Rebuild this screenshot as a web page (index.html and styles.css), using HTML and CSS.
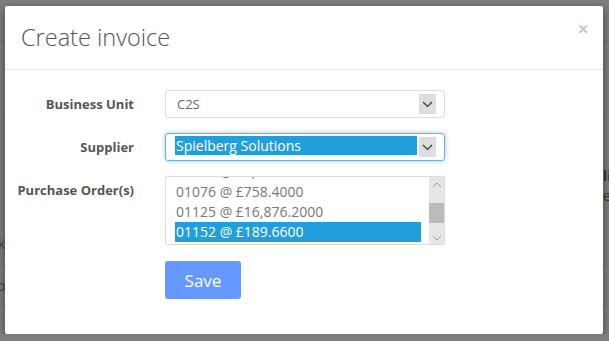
FILE: index.html
```html
<!DOCTYPE html>
<html lang="en">
<head>
    <meta charset="UTF-8">
    <meta name="viewport" content="width=device-width, initial-scale=1.0">
    <title>Create invoice</title>
    <link rel="stylesheet" href="styles.css">
</head>
<body>
    <!-- page behind the dialog -->
    <div class="backdrop">
        <span class="peek peek-k">k</span>
        <span class="peek peek-o">o</span>
        <span class="peek peek-li">li</span>
        <span class="peek peek-e">e</span>
    </div>

    <div class="overlay">
        <div class="modal">
            <div class="modal-header">
                <h1>Create invoice</h1>
                <span class="close">&times;</span>
            </div>
            <div class="modal-body">
                <label class="control-label">Business Unit</label>
                <div class="select">
                    <span class="select-text">C2S</span>
                    <span class="select-arrow">
                        <svg width="11" height="7" viewBox="0 0 11 7"><path d="M1 1l4.5 4.5L10 1" fill="none" stroke="#333" stroke-width="1.1"/></svg>
                    </span>
                </div>

                <label class="control-label">Supplier</label>
                <div class="select focused">
                    <span class="select-text selected">Spielberg Solutions</span>
                    <span class="select-arrow">
                        <svg width="11" height="7" viewBox="0 0 11 7"><path d="M1 1l4.5 4.5L10 1" fill="none" stroke="#333" stroke-width="1.1"/></svg>
                    </span>
                </div>

                <label class="control-label top">Purchase Order(s)</label>
                <div class="listbox">
                    <div class="options">
                        <div class="option">01042 @ £1,250.0000</div>
                        <div class="option">01076 @ £758.4000</div>
                        <div class="option">01125 @ £16,876.2000</div>
                        <div class="option selected">01152 @ £189.6600</div>
                    </div>
                    <div class="scrollbar">
                        <svg width="10" height="6" viewBox="0 0 10 6"><path d="M1 5l4-4 4 4" fill="none" stroke="#999" stroke-width="1"/></svg>
                        <div class="thumb"></div>
                        <svg width="10" height="6" viewBox="0 0 10 6"><path d="M1 1l4 4 4-4" fill="none" stroke="#999" stroke-width="1"/></svg>
                    </div>
                </div>

                <div></div>
                <div><button class="btn-save">Save</button></div>
            </div>
        </div>
    </div>
</body>
</html>
```

FILE: styles.css
```css
body {
    margin: 0;
    font-family: "Open Sans", "Liberation Sans", sans-serif;
    background-color: #7e7e7e;
    overflow: hidden;
}
.backdrop {
    position: absolute;
    top: 0;
    left: 0;
    width: 609px;
    height: 341px;
    background:
        linear-gradient(#747474, #747474) 0 40px / 609px 1px no-repeat,
        linear-gradient(#747474, #747474) 0 116px / 609px 1px no-repeat,
        linear-gradient(#747474, #747474) 0 265px / 609px 1px no-repeat,
        linear-gradient(#747474, #747474) 0 305px / 609px 1px no-repeat,
        #7e7e7e;
}
.peek {
    position: absolute;
    font-size: 14px;
    font-weight: bold;
    color: #3a342e;
}
.peek-k { left: -2px; top: 234px; font-weight: normal; color: #444; }
.peek-o { left: -3px; top: 276px; font-weight: normal; color: #444; }
.peek-li { left: 603px; top: 166px; }
.peek-e { left: 603px; top: 186px; font-weight: normal; }
.overlay {
    position: relative;
    padding: 6px 0 0 5px;
}
.modal {
    width: 598px;
    height: 328px;
    background: #fff;
    border-radius: 2px;
    box-shadow: 0 3px 9px rgba(0,0,0,0.5);
}
.modal-header {
    display: flex;
    justify-content: space-between;
    align-items: flex-start;
    height: 63px;
    padding: 0 16px;
    border-bottom: 1px solid #e5e5e5;
}
.modal-header h1 {
    margin: 15px 0 0;
    font-size: 23.5px;
    font-weight: 300;
    color: #555;
    line-height: normal;
}
.close {
    margin-top: 13px;
    margin-right: -2px;
    font-size: 20px;
    font-weight: bold;
    color: #c8c8c8;
    line-height: 1;
}
.modal-body {
    display: grid;
    grid-template-columns: 116px 280px;
    column-gap: 31px;
    row-gap: 15px;
    padding: 20px 0 0 13px;
}
.control-label {
    align-self: center;
    text-align: right;
    white-space: nowrap;
    font-size: 13px;
    font-weight: bold;
    color: #555;
}
.control-label.top {
    align-self: start;
    padding-top: 5px;
    direction: rtl;
}
.select {
    display: flex;
    align-items: center;
    height: 26px;
    border: 1px solid #dcdcdc;
    border-radius: 3px;
    padding: 0 8px 0 9px;
}
.select.focused {
    border-color: #66afe9;
    box-shadow: 0 0 5px rgba(102,175,233,0.6);
}
.select-text {
    flex: 1;
    font-size: 13px;
    color: #666;
    padding-left: 2px;
}
.select-text.selected {
    height: 19px;
    line-height: 19px;
    margin-top: -3px;
    margin-right: 2px;
    padding-left: 1px;
    font-size: 14px;
    color: #fff;
    background: #229fdb;
}
.select-arrow {
    display: flex;
    align-items: center;
    justify-content: center;
    width: 17px;
    height: 20px;
    background: #dedede;
}
.listbox {
    display: flex;
    height: 67px;
    border: 1px solid #dcdcdc;
    border-radius: 2px;
    overflow: hidden;
}
.options {
    flex: 1;
    padding-left: 9px;
    margin-top: -15px;
    margin-right: 8px;
}
.option {
    height: 20px;
    line-height: 20px;
    padding-left: 1px;
    font-size: 14px;
    color: #777;
}
.option.selected {
    background: #229fdb;
    color: #fff;
}
.scrollbar {
    display: flex;
    flex-direction: column;
    align-items: center;
    justify-content: space-between;
    width: 15px;
    padding: 5px 0 3px;
    background: #e6e6e6;
}
.thumb {
    width: 15px;
    height: 20px;
    margin-top: 8px;
    margin-bottom: 6px;
    background: #bbb;
}
.btn-save {
    width: 76px;
    height: 38px;
    margin-top: 1px;
    border: none;
    border-radius: 3px;
    background-color: #6699ff;
    color: #fff;
    font-family: "Open Sans", "Liberation Sans", sans-serif;
    font-size: 17px;
    cursor: pointer;
}
```
